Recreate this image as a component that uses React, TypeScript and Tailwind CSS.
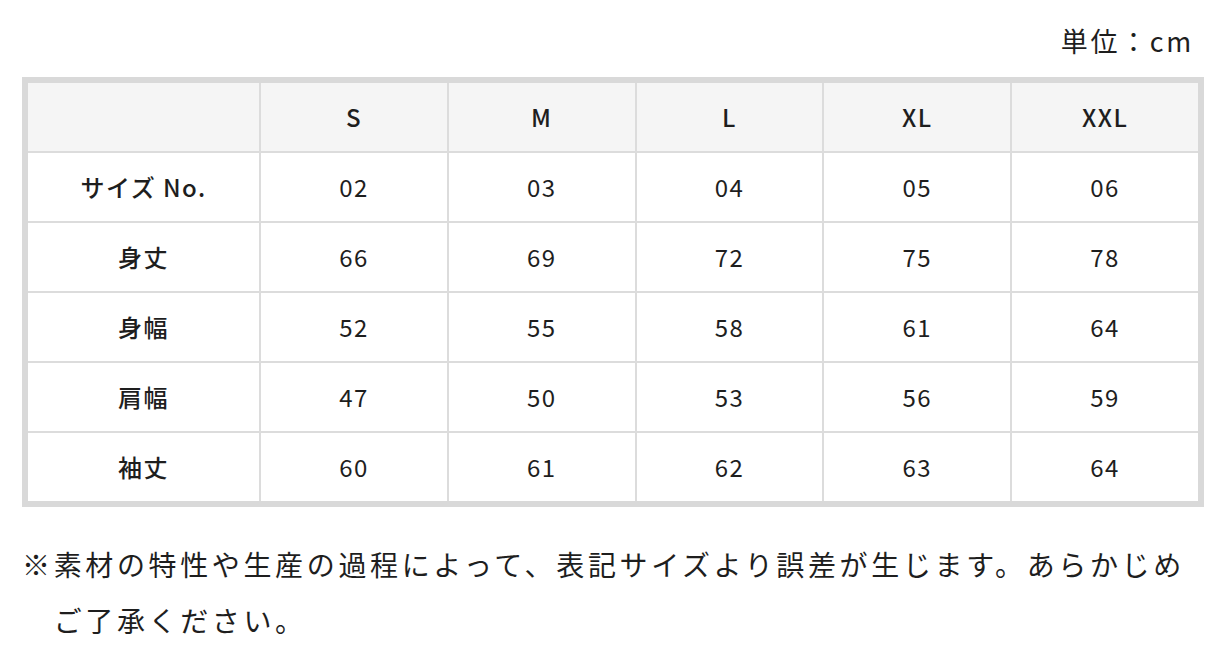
import React from "react";

const sizes = ["S", "M", "L", "XL", "XXL"];

const rows: { label: string; values: string[] }[] = [
  { label: "サイズ No.", values: ["02", "03", "04", "05", "06"] },
  { label: "身丈", values: ["66", "69", "72", "75", "78"] },
  { label: "身幅", values: ["52", "55", "58", "61", "64"] },
  { label: "肩幅", values: ["47", "50", "53", "56", "59"] },
  { label: "袖丈", values: ["60", "61", "62", "63", "64"] },
];

const font = { fontFamily: '"Noto Sans CJK JP", "Noto Sans", sans-serif' };

export default function App() {
  return (
    <div
      className="w-[1218px] h-[648px] bg-white text-[#1e1e1e] pl-[22px] pr-[14px] pt-[21px]"
      style={font}
    >
      <p className="text-right text-[27px] leading-[40px] tracking-[0.1em] pr-[10px]">
        単位：cm
      </p>

      <div className="mt-[16px] border-[6px] border-[#d9d9d9] bg-[#dcdcdc]">
        <div className="grid grid-cols-[231px_1fr_1fr_1fr_1fr_1fr] gap-[2px]">
          <div className="h-[68px] bg-[#f5f5f5]" />
          {sizes.map((s) => (
            <div
              key={s}
              className="h-[68px] bg-[#f5f5f5] flex items-center justify-center text-[24px] font-medium tracking-[0.06em]"
            >
              {s}
            </div>
          ))}
          {rows.map((row) => (
            <React.Fragment key={row.label}>
              <div className="h-[68px] bg-white flex items-center justify-center text-[24px] font-medium tracking-[0.06em]">
                {row.label}
              </div>
              {row.values.map((v, i) => (
                <div
                  key={i}
                  className="h-[68px] bg-white flex items-center justify-center text-[24px] tracking-[0.06em]"
                >
                  {v}
                </div>
              ))}
            </React.Fragment>
          ))}
        </div>
      </div>

      <p className="mt-[29px] pl-[1.13em] -indent-[1.13em] text-[28px] leading-[56px] tracking-[0.13em]">
        ※素材の特性や生産の過程によって、表記サイズより誤差が生じます。あらかじめご了承ください。
      </p>
    </div>
  );
}
